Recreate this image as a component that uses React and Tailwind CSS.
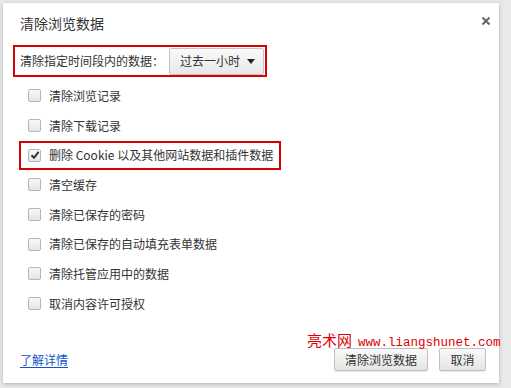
const items = [
  { label: "清除浏览记录" },
  { label: "清除下载记录" },
  { label: "删除 Cookie 以及其他网站数据和插件数据", checked: true, boxed: true },
  { label: "清空缓存" },
  { label: "清除已保存的密码" },
  { label: "清除已保存的自动填充表单数据" },
  { label: "清除托管应用中的数据" },
  { label: "取消内容许可授权" },
];

const Checkbox = ({ checked }) => (
  <span className="flex h-[13px] w-[13px] shrink-0 items-center justify-center rounded-[2px] border border-[#b5b5b5] bg-gradient-to-b from-[#f8f8f8] to-[#e6e6e6]">
    {checked && (
      <svg width="10" height="10" viewBox="0 0 10 10">
        <path d="M1.5 5.2 L4 7.8 L8.6 1.8" fill="none" stroke="#333" strokeWidth="2" />
      </svg>
    )}
  </span>
);

export default function App() {
  return (
    <div
      className="h-[388px] w-[511px] bg-[#e9e9e9] p-[3px] pr-[12px] pb-[5px]"
      style={{ fontFamily: '"Noto Sans CJK SC", "Noto Sans", sans-serif' }}
    >
      <div className="relative flex h-[380px] w-[496px] flex-col bg-white text-[12px] text-[#333] shadow-[0_1px_4px_rgba(0,0,0,0.25)]">
        <div className="flex items-center justify-between pl-[17px] pr-[8px] pt-[10px]">
          <span className="text-[14px] leading-[20px]">清除浏览数据</span>
          <svg width="10" height="10" viewBox="0 0 10 10" className="mb-[4px]">
            <path d="M1.5 1.5 L8.5 8.5 M8.5 1.5 L1.5 8.5" stroke="#666" strokeWidth="2" />
          </svg>
        </div>

        <div className="ml-[10px] mt-[12px] flex h-[32px] w-[254px] items-center gap-[5px] whitespace-nowrap border-2 border-[#d40000] pl-[5px]">
          <span>清除指定时间段内的数据：</span>
          <div className="flex h-[27px] w-[95px] items-center justify-between rounded-[2px] border border-[#c3c3c3] bg-gradient-to-b from-[#fafafa] to-[#e8e8e8] pl-[10px] pr-[8px]">
            <span>过去一小时</span>
            <span className="h-0 w-0 border-x-[4px] border-t-[5px] border-x-transparent border-t-[#222]" />
          </div>
        </div>

        <div className="mt-[4px] flex flex-col">
          {items.map((it) => (
            <div key={it.label} className="flex h-[29.7px] items-center">
              <div
                className={
                  it.boxed
                    ? "ml-[16px] flex h-[29px] items-center gap-[8px] border-2 border-[#d40000] pl-[7px] pr-[6px]"
                    : "ml-[25px] flex items-center gap-[8px]"
                }
              >
                <Checkbox checked={it.checked} />
                <span>{it.label}</span>
              </div>
            </div>
          ))}
        </div>

        <div className="mt-auto flex items-center justify-between pb-[12px] pl-[17px] pr-[13px]">
          <a className="text-[#15c] underline underline-offset-2">了解详情</a>
          <div className="flex gap-[11px]">
            <button className="h-[23px] w-[94px] rounded-[2px] border border-[#c0c0c0] bg-gradient-to-b from-[#fafafa] to-[#e5e5e5] text-[#333] shadow-[0_1px_0_rgba(0,0,0,0.08)]">
              清除浏览数据
            </button>
            <button className="h-[23px] w-[47px] rounded-[2px] border border-[#c0c0c0] bg-gradient-to-b from-[#fafafa] to-[#e5e5e5] text-[#333] shadow-[0_1px_0_rgba(0,0,0,0.08)]">
              取消
            </button>
          </div>
        </div>

        <div
          className="absolute left-[304px] top-[328px] flex items-baseline whitespace-nowrap text-[#e00000]"
          style={{ fontFamily: '"Liberation Mono", monospace' }}
        >
          <span className="mr-[6px] text-[15px] leading-[18px]" style={{ fontFamily: '"Noto Sans CJK SC", serif' }}>
            亮术网
          </span>
          <span className="text-[12.5px] leading-[18px]">www.liangshunet.com</span>
        </div>
      </div>
    </div>
  );
}
